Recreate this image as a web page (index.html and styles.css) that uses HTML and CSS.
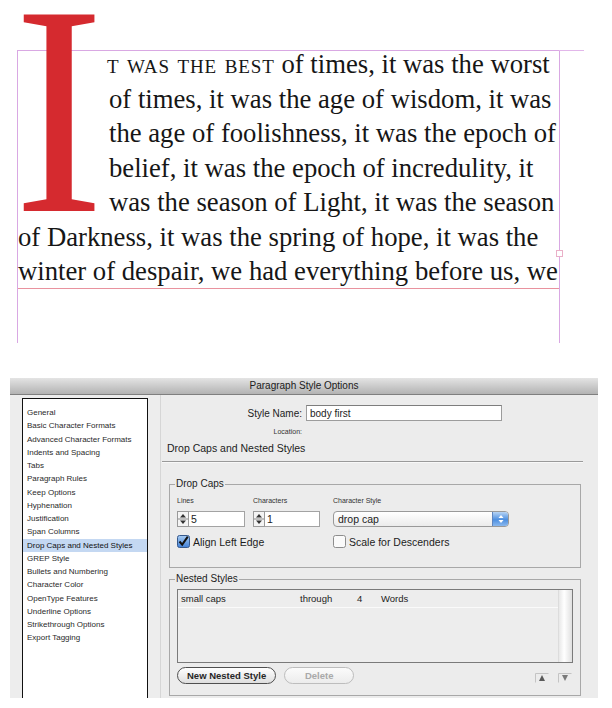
FILE: index.html
```html
<!DOCTYPE html>
<html lang="en">
<head>
    <meta charset="utf-8">
    <title>Paragraph Style Options</title>
    <link rel="stylesheet" href="styles.css">
</head>
<body>

<div class="spread">
    <div class="frame">
        <div class="story">
            <span class="drop"><span>I</span></span>
            <div class="ln"><span class="sc">t was the best</span> of times, it was the worst</div>
            <div class="ln in">of times, it was the age of wisdom, it was</div>
            <div class="ln in">the age of foolishness, it was the epoch of</div>
            <div class="ln in">belief, it was the epoch of incredulity, it</div>
            <div class="ln in">was the season of Light, it was the season</div>
            <div class="ln">of Darkness, it was the spring of hope, it was the</div>
            <div class="ln">winter of despair, we had everything before us, we</div>
        </div>
        <span class="handle"></span>
    </div>
</div>

<div class="dialog">
    <div class="titlebar">Paragraph Style Options</div>
    <div class="dialog-body">
        <div class="sidebar">
            <ul class="cat-list">
                <li>General</li>
                <li>Basic Character Formats</li>
                <li>Advanced Character Formats</li>
                <li>Indents and Spacing</li>
                <li>Tabs</li>
                <li>Paragraph Rules</li>
                <li>Keep Options</li>
                <li>Hyphenation</li>
                <li>Justification</li>
                <li>Span Columns</li>
                <li class="selected">Drop Caps and Nested Styles</li>
                <li>GREP Style</li>
                <li>Bullets and Numbering</li>
                <li>Character Color</li>
                <li>OpenType Features</li>
                <li>Underline Options</li>
                <li>Strikethrough Options</li>
                <li>Export Tagging</li>
            </ul>
        </div>

        <div class="panel">
            <div class="name-row">
                <label class="row-label" for="styleName">Style Name:</label>
                <input type="text" id="styleName" value="body first">
            </div>
            <div class="location-row">
                <span class="row-label">Location:</span>
            </div>
            <div class="section-title">Drop Caps and Nested Styles</div>
            <div class="rule"></div>

            <fieldset class="group drop-group">
                <legend>Drop Caps</legend>
                <div class="drop-grid">
                    <span class="small-label">Lines</span>
                    <span class="small-label">Characters</span>
                    <span class="small-label">Character Style</span>

                    <div class="spin">
                        <svg class="stepper" width="12" height="16" viewBox="0 0 12 16">
                            <rect x="0.5" y="0.5" width="11" height="15" fill="#f4f4f4" stroke="#9a9a9a"/>
                            <line x1="1" y1="8" x2="11" y2="8" stroke="#8a8a8a"/>
                            <path d="M3 6.5 L6 3 L9 6.5 Z" fill="#333"/>
                            <path d="M3 9.5 L6 13 L9 9.5 Z" fill="#333"/>
                        </svg>
                        <span class="spin-field">5</span>
                    </div>
                    <div class="spin narrow">
                        <svg class="stepper" width="12" height="16" viewBox="0 0 12 16">
                            <rect x="0.5" y="0.5" width="11" height="15" fill="#f4f4f4" stroke="#9a9a9a"/>
                            <line x1="1" y1="8" x2="11" y2="8" stroke="#8a8a8a"/>
                            <path d="M3 6.5 L6 3 L9 6.5 Z" fill="#333"/>
                            <path d="M3 9.5 L6 13 L9 9.5 Z" fill="#333"/>
                        </svg>
                        <span class="spin-field">1</span>
                    </div>
                    <div class="popup">
                        <span class="popup-text">drop cap</span>
                        <span class="popup-btn">
                            <svg width="8" height="12" viewBox="0 0 8 12">
                                <path d="M1.5 5 L4 2 L6.5 5 Z" fill="#fff"/>
                                <path d="M1.5 7 L4 10 L6.5 7 Z" fill="#fff"/>
                            </svg>
                        </span>
                    </div>

                    <div class="check-row">
                        <svg class="check" width="13" height="13" viewBox="0 0 13 13">
                            <defs>
                                <linearGradient id="blueBox" x1="0" y1="0" x2="0" y2="1">
                                    <stop offset="0" stop-color="#a9cdf3"/>
                                    <stop offset="1" stop-color="#3f7fd6"/>
                                </linearGradient>
                            </defs>
                            <rect x="0.5" y="0.5" width="12" height="12" rx="2" fill="url(#blueBox)" stroke="#36598c"/>
                            <path d="M2.5 6.5 L5.2 9.6 L10.8 1.6" fill="none" stroke="#111" stroke-width="2"/>
                        </svg>
                        <span>Align Left Edge</span>
                    </div>
                    <span></span>
                    <div class="check-row">
                        <svg class="check" width="13" height="13" viewBox="0 0 13 13">
                            <rect x="0.5" y="0.5" width="12" height="12" rx="2" fill="#fafafa" stroke="#8d8d8d"/>
                        </svg>
                        <span>Scale for Descenders</span>
                    </div>
                </div>
            </fieldset>

            <fieldset class="group nested-group">
                <legend>Nested Styles</legend>
                <div class="nested-list">
                    <div class="nested-rows">
                        <div class="nested-row">
                            <span class="c-style">small caps</span>
                            <span class="c-through">through</span>
                            <span class="c-count">4</span>
                            <span class="c-unit">Words</span>
                        </div>
                    </div>
                    <div class="scroll-track"></div>
                </div>
                <div class="button-row">
                    <button type="button" class="pill">New Nested Style</button>
                    <button type="button" class="pill disabled">Delete</button>
                    <span class="move-btn">
                        <svg width="14" height="10" viewBox="0 0 14 10">
                            <path d="M0.5 9.5 V0.5 H13.5" fill="none" stroke="#c4c4c4"/>
                            <path d="M4 8 L7 2 L10 8 Z" fill="#5a5a5a"/>
                        </svg>
                    </span>
                    <span class="move-btn">
                        <svg width="14" height="10" viewBox="0 0 14 10">
                            <path d="M0.5 9.5 V0.5 H13.5" fill="none" stroke="#c4c4c4"/>
                            <path d="M4 2 L7 8 L10 2 Z" fill="#7a7a7a"/>
                        </svg>
                    </span>
                </div>
            </fieldset>
        </div>
    </div>
</div>

</body>
</html>
```

FILE: styles.css
```css
body {
    margin: 0;
    background-color: #ffffff;
    font-family: "Liberation Sans", Arial, sans-serif;
}

/* layout page with the drop cap */
.spread {
    height: 378px;
    padding-top: 50px;
    box-sizing: border-box;
}
.frame {
    position: relative;
    margin-left: 17px;
    width: 543px;
    height: 293px;
    box-sizing: border-box;
    border: 1px solid #d9a8e3;
    border-bottom: 0;
}
.frame::after {
    content: "";
    position: absolute;
    top: -1px;
    left: 100%;
    width: 25px;
    height: 1px;
    background: #e2b7ea;
}
.handle {
    position: absolute;
    right: -4px;
    top: 199px;
    width: 5px;
    height: 5px;
    border: 1px solid #eab0c8;
    background: #fff;
}
.story {
    margin-top: -4px;
    height: 241px;
    border-bottom: 1px solid #e9929e;
    font-family: "Liberation Serif", "Times New Roman", serif;
    font-size: 26.7px;
    line-height: 34.5px;
    color: #161616;
}
.drop {
    float: left;
    width: 89px;
    height: 172px;
    font-size: 300px;
    line-height: 127px;
    color: #d52a2f;
}
.drop span {
    display: inline-block;
    margin-left: -4px;
    transform: scaleX(0.9);
    transform-origin: 0 0;
}
.ln {
    white-space: nowrap;
}
.ln.in {
    text-indent: 2px;
}
.sc {
    font-variant: small-caps;
    letter-spacing: 0.9px;
}

/* dialog */
.dialog {
    margin-left: 10px;
    width: 588px;
    height: 320px;
    background: #ececec;
    color: #1c1c1c;
    overflow: hidden;
}
.titlebar {
    height: 16px;
    line-height: 16px;
    border-bottom: 1px solid #7f7f7f;
    background: linear-gradient(#e4e4e4, #b3b3b3);
    text-align: center;
    font-size: 10px;
    color: #202020;
}
.dialog-body {
    display: flex;
    height: 303px;
}
.sidebar {
    width: 138px;
    padding: 3px 0 0 12px;
    border-right: 1px solid #d6d6d6;
    background: #ededed;
}
.cat-list {
    list-style: none;
    margin: 0;
    padding: 7px 0 0 0;
    width: 126px;
    height: 320px;
    box-sizing: border-box;
    border: 1.5px solid #111;
    border-bottom: 0;
    background: #fff;
}
.cat-list li {
    height: 13.25px;
    line-height: 13.25px;
    padding-left: 4px;
    font-size: 8px;
    color: #2a2a2a;
    white-space: nowrap;
}
.cat-list li.selected {
    background: #c4d8f2;
    color: #111;
}

.panel {
    flex: 1;
    padding-left: 6px;
    font-size: 10px;
}
.name-row {
    display: flex;
    align-items: center;
    margin-top: 10px;
    height: 16px;
}
.row-label {
    display: inline-block;
    width: 135px;
    text-align: right;
}
.name-row input {
    margin-left: 4px;
    width: 196px;
    height: 16px;
    box-sizing: border-box;
    padding: 0 3px;
    border: 1px solid #9c9c9c;
    border-top-color: #7d7d7d;
    background: #fff;
    font-family: inherit;
    font-size: 10px;
    color: #1c1c1c;
    outline: none;
}
.location-row {
    margin-top: 6px;
    height: 10px;
    line-height: 10px;
    font-size: 7px;
    color: #333;
}
.section-title {
    margin-top: 4px;
    height: 14px;
    line-height: 14px;
    font-size: 10.5px;
}
.rule {
    margin: 6px 0 0 -5px;
    width: 421px;
    height: 1px;
    background: #9a9a9a;
    border-bottom: 1px solid #f8f8f8;
}

.group {
    margin: 0 0 0 2px;
    padding: 0 7px;
    width: 412px;
    min-width: 0;
    box-sizing: border-box;
    border: 1px solid #a8a8a8;
}
.group legend {
    margin-left: -2px;
    padding: 0 1px;
    font-size: 10px;
    line-height: 12px;
    color: #1c1c1c;
}
.drop-group {
    margin-top: 15px;
    height: 90px;
}
.nested-group {
    margin-top: 5px;
    height: 123px;
}

.drop-grid {
    display: grid;
    grid-template-columns: 76px 80px 176px;
    grid-template-rows: 9px 16px 13px;
    row-gap: 6px;
    margin-top: 6px;
}
.drop-grid .check-row {
    margin-top: 2px;
}
.small-label {
    font-size: 7px;
    line-height: 9px;
    color: #333;
}
.spin {
    display: flex;
    height: 16px;
}
.stepper {
    display: block;
    flex-shrink: 0;
}
.spin-field {
    width: 56px;
    height: 16px;
    box-sizing: border-box;
    padding-left: 2px;
    border: 1px solid #a3a3a3;
    border-left: 0;
    background: #fff;
    line-height: 14px;
    font-size: 10.5px;
}
.spin.narrow .spin-field {
    width: 55px;
}
.popup {
    display: flex;
    height: 16px;
    box-sizing: border-box;
    border: 1px solid #999;
    border-radius: 4px;
    background: linear-gradient(#ffffff, #ebebeb);
    overflow: hidden;
}
.popup-text {
    flex: 1;
    padding-left: 4px;
    line-height: 14px;
    font-size: 10.5px;
}
.popup-btn {
    width: 15px;
    display: flex;
    align-items: center;
    justify-content: center;
    border-left: 1px solid #5f86c0;
    background: linear-gradient(#b7d4f5, #4d8fe0 55%, #8ab8ee);
}
.check-row {
    display: flex;
    align-items: center;
    gap: 3px;
    height: 13px;
    font-size: 10.5px;
    white-space: nowrap;
}
.check {
    display: block;
    flex-shrink: 0;
}

.nested-list {
    display: flex;
    margin-top: 4px;
    height: 74px;
    box-sizing: border-box;
    border: 1px solid #7a7a7a;
    background: #ededed;
}
.nested-rows {
    flex: 1;
}
.nested-row {
    position: relative;
    height: 17px;
    line-height: 17px;
    border-bottom: 1px solid #fafafa;
    font-size: 9.5px;
}
.nested-row span {
    position: absolute;
    top: 0;
}
.c-style { left: 3px; }
.c-through { left: 122px; }
.c-count { left: 179px; }
.c-unit { left: 203px; }
.scroll-track {
    width: 13px;
    border-left: 1px solid #dcdcdc;
    background: linear-gradient(90deg, #e8e8e8, #ffffff 40%, #e0e0e0);
}

.button-row {
    display: flex;
    align-items: center;
    margin-top: 4px;
    height: 17px;
}
.pill {
    height: 17px;
    box-sizing: border-box;
    padding: 0 9px;
    border: 1px solid #4f4f4f;
    border-radius: 9px;
    background: linear-gradient(#ffffff, #dedede);
    font-family: inherit;
    font-size: 9.5px;
    font-weight: bold;
    color: #262626;
    line-height: 15px;
}
.pill.disabled {
    margin-left: 8px;
    width: 70px;
    border-color: #bdbdbd;
    background: linear-gradient(#fbfbfb, #ececec);
    color: #a9a9a9;
}
.move-btn {
    display: flex;
    width: 14px;
    height: 10px;
    margin-top: 4px;
}
.move-btn:first-of-type {
    margin-left: auto;
}
.move-btn + .move-btn {
    margin-left: 9px;
    margin-right: 1px;
}
```
